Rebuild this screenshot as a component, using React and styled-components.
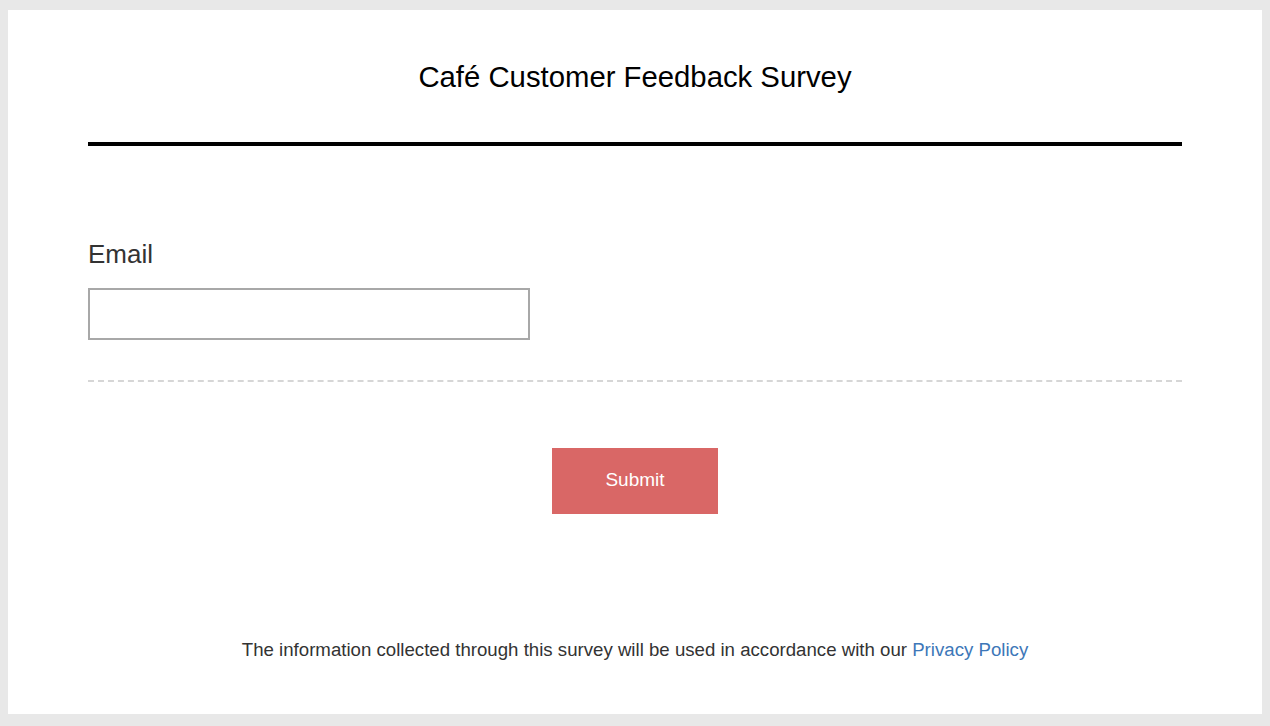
import React from 'react';
import styled, { createGlobalStyle } from 'styled-components';

const GlobalStyle = createGlobalStyle`
  html, body {
    margin: 0;
    padding: 0;
    background: #e8e8e8;
    font-family: "Liberation Sans", Arial, sans-serif;
  }
`;

const Page = styled.div`
  padding: 10px 8px 12px;
`;

const Card = styled.main`
  background: #ffffff;
  padding: 50px 80px 53px;
`;

const Header = styled.header`
  border-bottom: 4px solid #000;
  padding-bottom: 48px;
`;

const Title = styled.h1`
  margin: 0;
  font-size: 29.3px;
  line-height: 34px;
  font-weight: 400;
  color: #000;
  text-align: center;
`;

const Field = styled.section`
  padding: 93px 0 40px;
  border-bottom: 2px dashed #d6d6d6;
`;

const Label = styled.label`
  display: block;
  font-size: 26px;
  line-height: 30px;
  color: #333;
  margin-bottom: 19px;
`;

const Input = styled.input`
  display: block;
  box-sizing: border-box;
  width: 442px;
  height: 52px;
  margin: 0;
  border: 2px solid #a8a8a8;
  border-radius: 0;
  padding: 0 12px;
  font: inherit;
  font-size: 18px;
  outline: none;
`;

const Actions = styled.div`
  display: flex;
  justify-content: center;
  padding-top: 66px;
`;

const SubmitButton = styled.button`
  display: flex;
  align-items: center;
  justify-content: center;
  width: 166px;
  height: 66px;
  padding: 0 0 2px;
  border: none;
  border-radius: 0;
  background: #d96766;
  color: #fff;
  font-family: inherit;
  font-size: 19px;
  cursor: pointer;
`;

const Footer = styled.p`
  margin: 125px 0 0;
  font-size: 18.65px;
  line-height: 22px;
  color: #333;
  text-align: center;
`;

const Link = styled.a`
  color: #3d77b8;
  text-decoration: none;
`;

export default function App() {
  return (
    <>
      <GlobalStyle />
      <Page>
        <Card>
          <Header>
            <Title>Café Customer Feedback Survey</Title>
          </Header>
          <Field>
            <Label htmlFor="email">Email</Label>
            <Input id="email" type="email" />
          </Field>
          <Actions>
            <SubmitButton type="button">Submit</SubmitButton>
          </Actions>
          <Footer>
            The information collected through this survey will be used in accordance with our{' '}
            <Link href="#privacy">Privacy Policy</Link>
          </Footer>
        </Card>
      </Page>
    </>
  );
}
